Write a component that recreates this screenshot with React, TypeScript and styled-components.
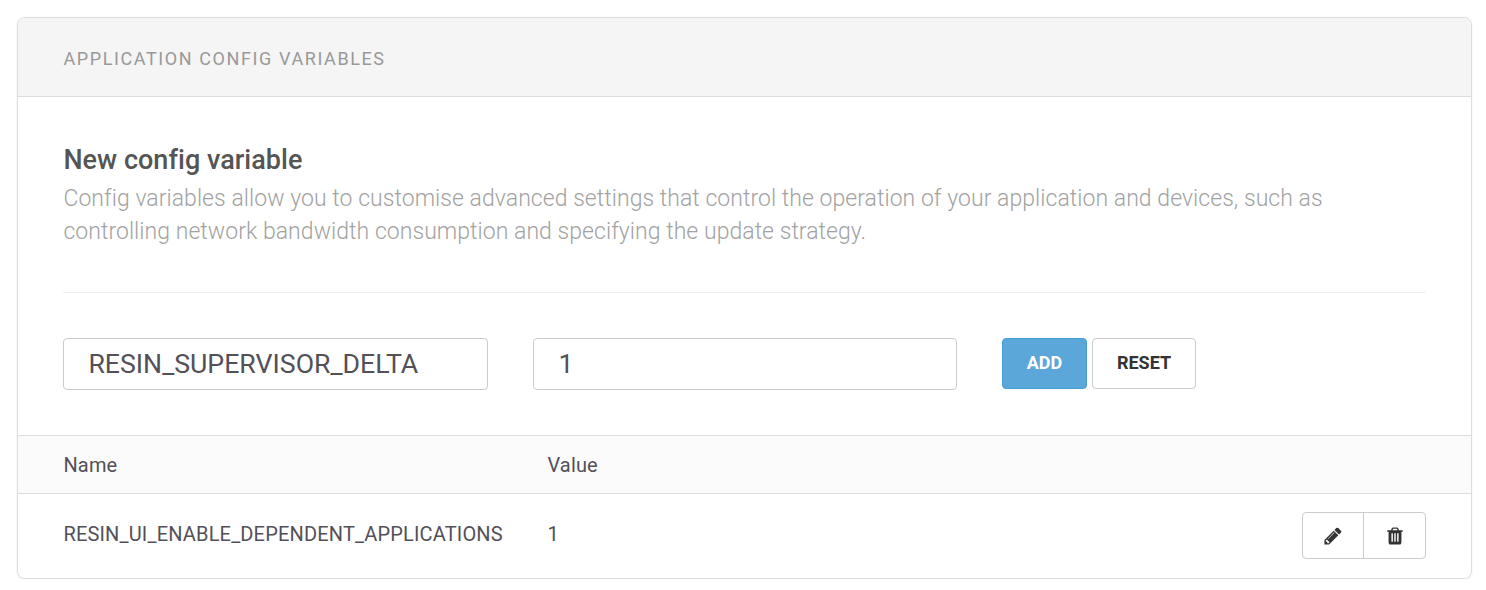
import React, { useState } from "react";
import styled, { createGlobalStyle } from "styled-components";

const GlobalStyle = createGlobalStyle`
  * { box-sizing: border-box; }
  body { margin: 0; background: #fff; font-family: Roboto, "Liberation Sans", sans-serif; color: #535058; }
`;
const Panel = styled.section`
  margin: 17px 14px 0 17px;
  height: 562px;
  border: 1px solid #ddd;
  border-radius: 8px;
  overflow: hidden;
  background: #fff;
  box-shadow: 0 1px 2px rgba(0, 0, 0, 0.08);
`;
const PanelHeader = styled.header`
  height: 79px;
  padding: 3px 45px 0;
  display: flex;
  align-items: center;
  background: #f5f5f5;
  border-bottom: 1px solid #ddd;
  font-size: 18px;
  line-height: 22px;
  letter-spacing: 1.6px;
  text-indent: 0.4px;
  color: #999;
`;
const Intro = styled.div`
  margin: 0 45px;
  height: 196px;
  padding-top: 45px;
  border-bottom: 1px solid #eee;
`;
const Title = styled.h2`
  margin: 0;
  font-size: 27px;
  line-height: 37px;
  letter-spacing: 0.03px;
  text-indent: 0.4px;
  font-weight: 500;
  color: #555;
`;
const Description = styled.p`
  margin: 3px 0 0;
  padding-left: 0.4px;
  font-size: 23px;
  line-height: 33px;
  letter-spacing: 0.05px;
  font-weight: 300;
  color: #a2a2a2;
`;
const Form = styled.form`
  display: flex;
  height: 142px;
  padding: 45px 45px 0;
`;
const Input = styled.input<{ $width: number }>`
  width: ${(p) => p.$width}px;
  height: 52px;
  margin-right: 45px;
  padding: 0 24px 0 24.4px;
  border: 1px solid #ccc;
  border-radius: 4px;
  font: 400 26.7px Roboto, sans-serif;
  color: #535058;
  outline: none;
`;
const Button = styled.button<{ $primary?: boolean }>`
  width: ${(p) => (p.$primary ? 85 : 104)}px;
  height: 51px;
  margin-right: 5px;
  padding: 0 0 2px;
  border: 1px solid ${(p) => (p.$primary ? "#469ed3" : "#ccc")};
  border-radius: 4px;
  background: ${(p) => (p.$primary ? "#5ba7d9" : "#fff")};
  color: ${(p) => (p.$primary ? "#fff" : "#333")};
  font: 700 18px Roboto, sans-serif;
`;
const Table = styled.div``;
const Row = styled.div<{ $head?: boolean }>`
  display: grid;
  grid-template-columns: 484px 1fr auto;
  align-items: center;
  height: ${(p) => (p.$head ? 59 : 84)}px;
  padding: ${(p) => (p.$head ? "1px 45px 0" : "0 45px 2px")};
  font-size: 20px;
  background: ${(p) => (p.$head ? "#fbfbfb" : "#fff")};
  border: solid #ddd;
  border-width: ${(p) => (p.$head ? "1px 0" : "0")};
`;
const Cell = styled.span<{ $raised?: boolean }>`
  line-height: 24px;
  letter-spacing: 0.17px;
  text-indent: 0.4px;
  padding-bottom: ${(p) => (p.$raised ? 3 : 0)}px;
`;
const Actions = styled.div`
  display: grid;
  grid-template-columns: 60px 62px;
  width: 124px;
  height: 47px;
  border: 1px solid #ccc;
  border-radius: 4px;
`;
const IconButton = styled.button`
  display: flex;
  align-items: center;
  justify-content: center;
  padding: 1px 0 0;
  border: 0;
  background: none;
  color: #333;
  & + & { border-left: 1px solid #ccc; }
`;
const Icon = styled.svg.attrs({ viewBox: "0 0 1792 1792", fill: "currentColor" })`
  width: 20px;
  height: 20px;
`;
const PencilIcon = () => (
  <Icon>
    <path d="M491 1536l91-91-235-235-91 91v107h128v128h107zm523-928q0-22-22-22-10 0-17 7l-542 542q-7 7-7 17 0 22 22 22 10 0 17-7l542-542q7-7 7-17zm-54-192l416 416-832 832h-416v-416zm683 96q0 53-37 90l-166 166-416-416 166-165q36-38 90-38 53 0 91 38l235 234q37 39 37 91z" />
  </Icon>
);
const TrashIcon = () => (
  <Icon>
    <path d="M704 1376v-704q0-14-9-23t-23-9h-64q-14 0-23 9t-9 23v704q0 14 9 23t23 9h64q14 0 23-9t9-23zm256 0v-704q0-14-9-23t-23-9h-64q-14 0-23 9t-9 23v704q0 14 9 23t23 9h64q14 0 23-9t9-23zm256 0v-704q0-14-9-23t-23-9h-64q-14 0-23 9t-9 23v704q0 14 9 23t23 9h64q14 0 23-9t9-23zm-544-992h448l-48-117q-7-9-17-11h-317q-10 2-17 11zm928 32v64q0 14-9 23t-23 9h-96v948q0 83-47 143.5t-113 60.5h-832q-66 0-113-58.5t-47-141.5v-952h-96q-14 0-23-9t-9-23v-64q0-14 9-23t23-9h309l70-167q15-37 54-63t79-26h320q40 0 79 26t54 63l70 167h309q14 0 23 9t9 23z" />
  </Icon>
);

export default function App() {
  const [name, setName] = useState("RESIN_SUPERVISOR_DELTA");
  const [value, setValue] = useState("1");
  return (
    <>
      <GlobalStyle />
      <Panel>
        <PanelHeader>APPLICATION CONFIG VARIABLES</PanelHeader>
        <Intro>
          <Title>New config variable</Title>
          <Description>
            Config variables allow you to customise advanced settings that control the operation of your application and devices, such as controlling network bandwidth consumption and specifying the update strategy.
          </Description>
        </Intro>
        <Form>
          <Input $width={425} value={name} onChange={(e) => setName(e.target.value)} />
          <Input $width={424} value={value} onChange={(e) => setValue(e.target.value)} />
          <Button type="button" $primary>ADD</Button>
          <Button type="button">RESET</Button>
        </Form>
        <Table>
          <Row $head><Cell>Name</Cell><Cell>Value</Cell></Row>
          <Row>
            <Cell $raised>RESIN_UI_ENABLE_DEPENDENT_APPLICATIONS</Cell>
            <Cell $raised>1</Cell>
            <Actions>
              <IconButton aria-label="Edit"><PencilIcon /></IconButton>
              <IconButton aria-label="Delete"><TrashIcon /></IconButton>
            </Actions>
          </Row>
        </Table>
      </Panel>
    </>
  );
}
